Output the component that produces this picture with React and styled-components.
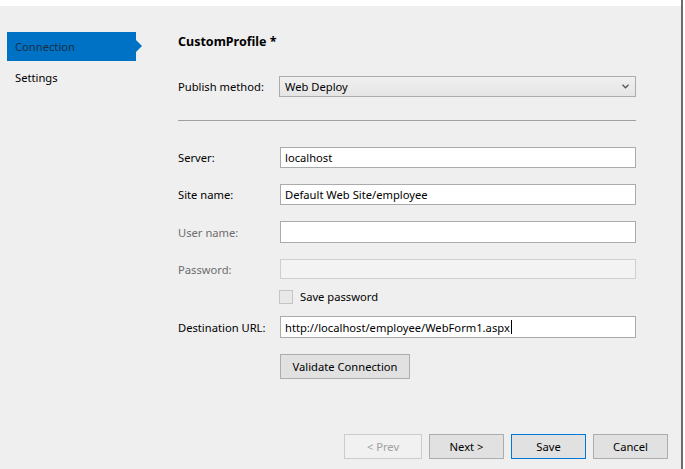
import React from "react";
import styled, { createGlobalStyle } from "styled-components";

const GlobalStyle = createGlobalStyle`
    html, body {
        margin: 0;
        padding: 0;
        background: #ffffff;
    }
    body {
        font-family: "Noto Sans", "Liberation Sans", sans-serif;
        font-size: 11.2px;
        color: #000000;
    }
`

const Window = styled.div`
    width: 681px;
    height: 469px;
    border-right: 2px solid #6b6b6b;
    display: flex;
    flex-direction: column;
`

const TopStrip = styled.div`
    height: 6px;
    background: #ffffff;
`

const Body = styled.div`
    flex: 1;
    display: flex;
    background: #efefef;
`

const Sidebar = styled.div`
    width: 143px;
    padding-top: 26px;
    display: flex;
    flex-direction: column;
    gap: 2px;
`

const NavItem = styled.div`
    position: relative;
    margin-left: 7px;
    width: 121px;
    height: 29px;
    padding-left: 8px;
    display: flex;
    align-items: center;
    background: ${p => (p.$active ? "#0072c6" : "transparent")};
    color: ${p => (p.$active ? "#1a2e40" : "#000000")};

    &::after {
        content: "";
        display: ${p => (p.$active ? "block" : "none")};
        position: absolute;
        right: -6px;
        top: 8px;
        border-top: 6px solid transparent;
        border-bottom: 6px solid transparent;
        border-left: 6px solid #0072c6;
    }
`

const Main = styled.div`
    flex: 1;
    display: flex;
    flex-direction: column;
    padding-left: 35px;
`

const Form = styled.div`
    width: 458px;
    display: flex;
    flex-direction: column;
`

const Title = styled.div`
    margin-top: 27px;
    height: 18px;
    font-weight: bold;
    font-size: 12.5px;
    line-height: 18px;
`

const Row = styled.div`
    display: flex;
    align-items: center;
    margin-top: ${p => p.$gap}px;
`

const Label = styled.div`
    width: 101px;
    color: ${p => (p.$disabled ? "#6d6d6d" : "#000000")};
    white-space: nowrap;
`

const TextBox = styled.div`
    flex: 1;
    box-sizing: border-box;
    height: ${p => p.$h || 21}px;
    margin-left: 1px;
    border: 1px solid ${p => (p.$disabled ? "#cfcfcf" : "#ababab")};
    background: ${p => (p.$disabled ? "#f3f3f3" : "#ffffff")};
    padding-left: 4px;
    display: flex;
    align-items: center;
    white-space: nowrap;
`

const Caret = styled.span`
    display: inline-block;
    width: 1px;
    height: 14px;
    background: #000000;
    margin-left: 1px;
`

const Select = styled.div`
    flex: 1;
    box-sizing: border-box;
    height: 21px;
    border: 1px solid #acacac;
    background: linear-gradient(#f0f0f0, #e5e5e5);
    padding: 0 6px 0 5px;
    display: flex;
    align-items: center;
    justify-content: space-between;
`

const Separator = styled.div`
    margin-top: 23px;
    height: 1px;
    background: #a0a0a0;
`

const CheckRow = styled.label`
    display: flex;
    align-items: center;
    gap: 7px;
    margin-top: 10px;
    margin-left: 101px;
`

const CheckBox = styled.span`
    box-sizing: border-box;
    width: 14px;
    height: 14px;
    border: 1px solid #c4c4c4;
    background: #e8e8e8;
`

const Button = styled.div`
    box-sizing: border-box;
    width: ${p => p.$w || 75}px;
    height: ${p => p.$h || 25}px;
    display: flex;
    align-items: center;
    justify-content: center;
    background: ${p => (p.$disabled ? "#f1f1f1" : "#e1e1e1")};
    border: 1px solid ${p => (p.$primary ? "#0078d7" : p.$disabled ? "#cccccc" : "#adadad")};
    color: ${p => (p.$disabled ? "#a0a0a0" : "#000000")};
`

const ValidateButton = styled(Button)`
    margin-top: 16px;
    margin-left: 102px;
`

const Footer = styled.div`
    margin-top: auto;
    margin-bottom: 10px;
    display: flex;
    justify-content: flex-end;
    gap: 7px;
    padding-right: 13px;
`

const Chevron = () => (
    <svg width="7" height="5" viewBox="0 0 7 5">
        <path d="M0.5 0.8 L3.5 3.8 L6.5 0.8" fill="none" stroke="#555" strokeWidth="1.3" />
    </svg>
);

const App = () => {
    return (
        <>
            <GlobalStyle />
            <Window>
                <TopStrip />
                <Body>
                    <Sidebar>
                        <NavItem $active>Connection</NavItem>
                        <NavItem>Settings</NavItem>
                    </Sidebar>
                    <Main>
                        <Form>
                            <Title>CustomProfile *</Title>
                            <Row $gap={25}>
                                <Label>Publish method:</Label>
                                <Select>
                                    <span>Web Deploy</span>
                                    <Chevron />
                                </Select>
                            </Row>
                            <Separator />
                            <Row $gap={26}>
                                <Label>Server:</Label>
                                <TextBox>localhost</TextBox>
                            </Row>
                            <Row $gap={16}>
                                <Label>Site name:</Label>
                                <TextBox>Default Web Site/employee</TextBox>
                            </Row>
                            <Row $gap={16}>
                                <Label $disabled>User name:</Label>
                                <TextBox $h={22} />
                            </Row>
                            <Row $gap={16}>
                                <Label $disabled>Password:</Label>
                                <TextBox $disabled $h={20} />
                            </Row>
                            <CheckRow>
                                <CheckBox />
                                <span>Save password</span>
                            </CheckRow>
                            <Row $gap={12}>
                                <Label>Destination URL:</Label>
                                <TextBox $h={22}>
                                    http://localhost/employee/WebForm1.aspx<Caret />
                                </TextBox>
                            </Row>
                            <ValidateButton $w={130}>Validate Connection</ValidateButton>
                        </Form>
                        <Footer>
                            <Button $disabled $w={78}>&lt; Prev</Button>
                            <Button>Next &gt;</Button>
                            <Button $primary>Save</Button>
                            <Button>Cancel</Button>
                        </Footer>
                    </Main>
                </Body>
            </Window>
        </>
    );
};

export default App;
